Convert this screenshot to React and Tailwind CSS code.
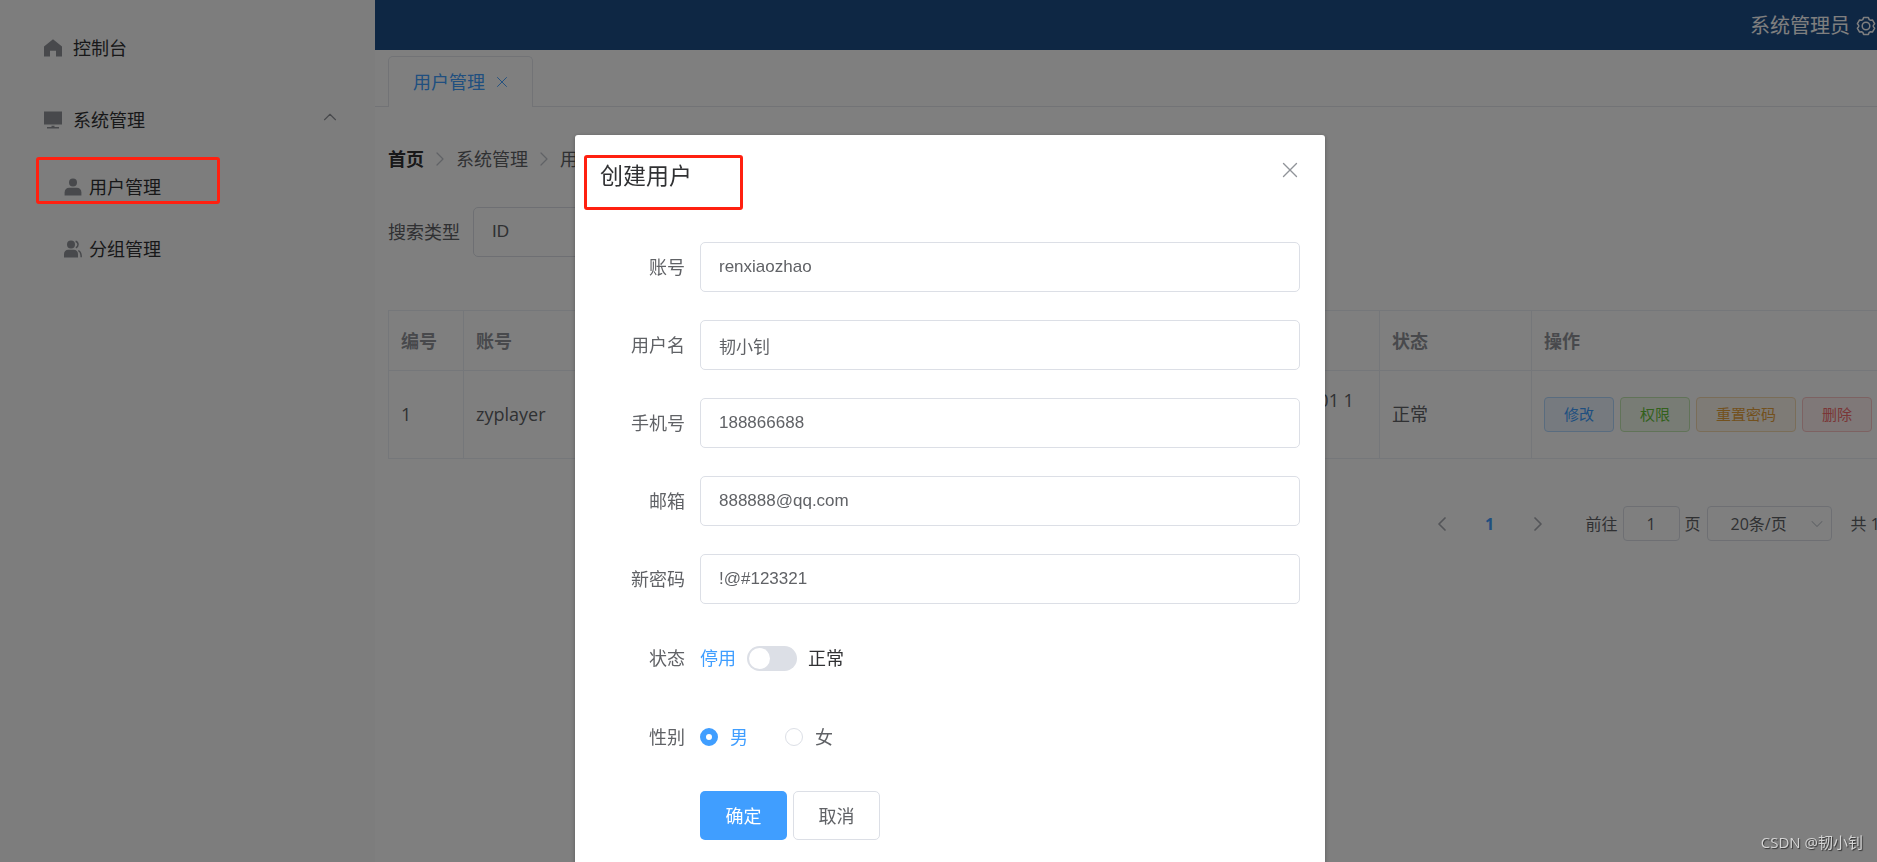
import React, { useState } from 'react';
import { ChevronDown, ChevronLeft, ChevronRight, ChevronUp, X } from 'lucide-react';

const HomeIcon = () => (
  <svg viewBox="0 0 18 18" className="size-[18px]" fill="currentColor">
    <path d="M9 0.3 18 7.6V17.6H12V11.8H6V17.6H0V7.6Z" />
  </svg>
);

const PlatformIcon = () => (
  <svg viewBox="0 0 18 18" className="size-[18px]" fill="currentColor">
    <path d="M0 0.5H18V13.5H0Z" />
    <path d="M7.5 14.8H10.5V16H15V17.4H3V16H7.5Z" />
  </svg>
);

const UserIcon = () => (
  <svg viewBox="0 0 18 18" className="size-[18px]" fill="currentColor">
    <circle cx="9" cy="4.5" r="4" />
    <path d="M0.6 17.5V14.5C0.6 11.6 2.6 9.8 5.2 9.8H12.8C15.4 9.8 17.4 11.6 17.4 14.5V17.5Z" />
  </svg>
);

const GroupIcon = () => (
  <svg viewBox="0 0 18 18" className="size-[18px]" fill="currentColor">
    <circle cx="7" cy="4.6" r="4" />
    <path d="M0 17.5V14.2C0 11.6 1.8 9.8 4.2 9.8H9.8C12.2 9.8 14 11.6 14 14.2V17.5Z" />
    <path d="M11.6 1.2C14.8 2.2 14.8 6.6 11.9 7.9M14.2 10.6C16.4 11.4 17.2 13 17.2 17.3" fill="none" stroke="currentColor" strokeWidth="1.5" />
  </svg>
);

const GearIcon = () => (
  <svg viewBox="0 0 20 20" className="size-5" fill="none" stroke="currentColor" strokeWidth="1.5" strokeLinejoin="round">
    <path d="M7.6 1.6H12.4L13.2 3.6L14.2 4.2L16.4 3.9L18.6 7.7L17.3 9.4V10.6L18.6 12.3L16.4 16.1L14.2 15.8L13.2 16.4L12.4 18.4H7.6L6.8 16.4L5.8 15.8L3.6 16.1L1.4 12.3L2.7 10.6V9.4L1.4 7.7L3.6 3.9L5.8 4.2L6.8 3.6Z" />
    <circle cx="10" cy="10" r="3.8" />
  </svg>
);

const menuItems = [
  { icon: UserIcon, label: '用户管理' },
  { icon: GroupIcon, label: '分组管理' },
];

const fields = [
  { id: 'userNo', label: '账号', value: 'renxiaozhao' },
  { id: 'userName', label: '用户名', value: '韧小钊' },
  { id: 'phone', label: '手机号', value: '188866688' },
  { id: 'email', label: '邮箱', value: '888888@qq.com' },
  { id: 'password', label: '新密码', value: '!@#123321' },
];

const columns = [
  { title: '编号', value: '1' },
  { title: '账号', value: 'zyplayer' },
  { title: '', value: '' },
  { title: '', value: '' },
  { title: '', value: '' },
  { title: '', value: '' },
  { title: '', value: <>2018-12-01 1<br />3:23:13</> },
  { title: '状态', value: '正常' },
];

const actions = [
  { label: '修改', style: 'text-[#409eff] bg-[#ecf5ff] border-[#b3d8ff]' },
  { label: '权限', style: 'text-[#67c23a] bg-[#f0f9eb] border-[#c2e7b0]' },
  { label: '重置密码', style: 'text-[#e6a23c] bg-[#fdf6ec] border-[#f5dab1]' },
  { label: '删除', style: 'text-[#f56c6c] bg-[#fef0f0] border-[#fbc4c4]' },
];

function Sidebar() {
  return (
    <aside className="w-[375px] shrink-0 bg-[#fafafa] pt-3 text-[#303133]">
      <a href="#console" className="flex h-[72px] items-center gap-[11px] pl-11">
        <span className="text-[#909399]"><HomeIcon /></span>
        控制台
      </a>
      <button className="flex h-[72px] w-full items-center gap-[11px] pr-[34px] pl-11">
        <span className="text-[#909399]"><PlatformIcon /></span>
        系统管理
        <ChevronUp size={22} strokeWidth={1.25} className="mb-1.5 ml-auto text-[#909399]" />
      </button>
      <nav>
        {menuItems.map((item) => {
          const Icon = item.icon;
          return (
            <a key={item.label} href="#menu" className="flex h-[62px] items-center gap-[7px] pl-16">
              <span className="text-[#909399]"><Icon /></span>
              {item.label}
            </a>
          );
        })}
      </nav>
    </aside>
  );
}

function UserTable() {
  return (
    <table className="mt-[53px] w-full table-fixed border-collapse text-left text-[#606266]">
      <colgroup>
        <col className="w-[75px]" />
        <col className="w-[152px]" />
        <col className="w-[152px]" />
        <col className="w-[153px]" />
        <col className="w-[160px]" />
        <col className="w-[152px]" />
        <col className="w-[147px]" />
        <col className="w-[152px]" />
        <col />
      </colgroup>
      <thead>
        <tr className="h-[60px] text-[#909399]">
          {columns.map((column, index) => (
            <th key={index} className="border border-[#ebeef5] px-3 font-bold">{column.title}</th>
          ))}
          <th className="border border-[#ebeef5] px-3 font-bold">操作</th>
        </tr>
      </thead>
      <tbody>
        <tr className="h-[88px]">
          {columns.map((column, index) => (
            <td key={index} className="border border-[#ebeef5] px-3 leading-[29px]">{column.value}</td>
          ))}
          <td className="border border-[#ebeef5] px-3">
            <div className="flex gap-[6px] whitespace-nowrap">
              {actions.map((action) => (
                <button key={action.label} className={`h-[35px] rounded-[4px] border px-[19px] text-[15px] ${action.style}`}>
                  {action.label}
                </button>
              ))}
            </div>
          </td>
        </tr>
      </tbody>
    </table>
  );
}

function Pagination() {
  return (
    <div className="mt-[47px] flex items-center justify-end text-base whitespace-nowrap text-[#606266]">
      <button aria-label="上一页" className="text-[#a8abb2]"><ChevronLeft size={24} strokeWidth={1.75} /></button>
      <button className="mx-[30px] w-3 font-bold text-[#409eff]">1</button>
      <button aria-label="下一页" className="mr-9 text-[#a8abb2]"><ChevronRight size={24} strokeWidth={1.75} /></button>
      <label htmlFor="jump">前往</label>
      <input id="jump" defaultValue="1" className="mx-[5px] h-[35px] w-[57px] rounded-[4px] border border-[#dcdfe6] text-center" />
      页
      <div className="relative mr-[19px] ml-[6px]">
        <select aria-label="每页条数" className="h-[35px] w-[125px] appearance-none rounded-[4px] border border-[#dcdfe6] pl-[23px]">
          <option>20条/页</option>
        </select>
        <ChevronDown size={20} strokeWidth={1.25} className="absolute top-2 right-[5px] text-[#c0c4cc]" />
      </div>
      共 1 条
    </div>
  );
}

function CreateUserDialog() {
  const [sex, setSex] = useState('男');
  const [enabled, setEnabled] = useState(false);

  return (
    <div role="dialog" aria-labelledby="dialog-title" className="relative mx-auto mt-[135px] w-full max-w-[750px] rounded-[3px] bg-white shadow-[0_1px_4px_rgba(0,0,0,0.3)]">
      <div className="flex h-[107px] items-start justify-between pt-[22px] pr-[22px] pl-[25px]">
        <h2 id="dialog-title" className="text-[23px] leading-9 text-[#303133]">创建用户</h2>
        <button aria-label="关闭" className="text-[#909399]"><X size={26} strokeWidth={1.25} /></button>
      </div>
      <div className="absolute top-5 left-[9px] h-[55px] w-[159px] rounded-[3px] border-[3px] border-[#ff2010]"></div>

      <form className="flex flex-col gap-[29px] pr-[25px] pb-16 pl-[25px] text-[#606266]">
        <div className="flex flex-col gap-7">
          {fields.map((field) => (
            <div key={field.id} className="flex items-center">
              <label htmlFor={field.id} className="w-[100px] pr-[15px] text-right">{field.label}</label>
              <input
                id={field.id}
                defaultValue={field.value}
                className="h-[50px] min-w-0 flex-1 rounded-[5px] border border-[#dcdfe6] px-[18px] font-['Liberation_Sans','Noto_Sans_CJK_SC',sans-serif] text-[17px]"
              />
            </div>
          ))}
        </div>

        <div className="flex h-[50px] items-center">
          <label htmlFor="status" className="w-[100px] pr-[15px] text-right">状态</label>
          <span className="text-[#409eff]">停用</span>
          <input
            id="status"
            type="checkbox"
            role="switch"
            checked={enabled}
            onChange={() => setEnabled(!enabled)}
            className="mx-[11px] h-[25px] w-[50px] appearance-none rounded-full bg-[#dcdfe6] p-0.5 before:block before:size-[21px] before:rounded-full before:bg-white checked:bg-[#409eff] checked:before:ml-auto"
          />
          <span className="text-[#303133]">正常</span>
        </div>

        <div role="radiogroup" aria-labelledby="sex-label" className="flex h-[50px] items-center">
          <span id="sex-label" className="w-[100px] pr-[15px] text-right">性别</span>
          {['男', '女'].map((name) => (
            <label key={name} className="mr-[37px] flex items-center gap-3 has-checked:text-[#409eff]">
              <input
                type="radio"
                name="sex"
                checked={sex === name}
                onChange={() => setSex(name)}
                className="size-[18px] appearance-none rounded-full border border-[#dcdfe6] checked:border-[6px] checked:border-[#409eff]"
              />
              {name}
            </label>
          ))}
        </div>

        <div className="flex gap-[6px] pl-[100px]">
          <button type="button" className="h-[49px] w-[87px] rounded-[5px] bg-[#409eff] text-white">确定</button>
          <button type="button" className="h-[49px] w-[87px] rounded-[5px] border border-[#dcdfe6]">取消</button>
        </div>
      </form>
    </div>
  );
}

export default function App() {
  return (
    <div className="flex h-screen overflow-hidden bg-white font-['Open_Sans','Noto_Sans_CJK_SC',sans-serif] text-lg">
      <Sidebar />

      <div className="min-w-0 flex-1 overflow-hidden">
        <header className="flex h-[50px] items-center justify-end gap-[6px] bg-[#1d4e89] pt-0.5 pr-px text-xl text-white">
          系统管理员
          <GearIcon />
        </header>

        {/* Tabs */}
        <div className="flex border-b border-[#e4e7ed] pt-[6px] pl-[13px]">
          <div className="-mb-px flex h-[51px] items-center gap-2 rounded-t-[5px] border border-b-0 border-[#e4e7ed] bg-white pr-[21px] pl-6 text-[#409eff]">
            用户管理
            <button aria-label="关闭标签"><X size={18} strokeWidth={1.25} /></button>
          </div>
        </div>

        <main className="-mr-[23px] pt-[38px] pl-[13px]">
          <div className="flex items-center gap-1 text-[#606266]">
            <a href="#home" className="font-bold text-[#303133]">首页</a>
            <ChevronRight size={24} strokeWidth={1.25} className="text-[#c0c4cc]" />
            <span>系统管理</span>
            <ChevronRight size={24} strokeWidth={1.25} className="text-[#c0c4cc]" />
            <span>用户管理</span>
          </div>

          <div className="mt-[34px] flex items-center gap-[13px] text-[#606266]">
            <label htmlFor="searchType">搜索类型</label>
            <select id="searchType" className="h-[50px] w-[190px] appearance-none rounded-[5px] border border-[#dcdfe6] px-[18px] font-['Liberation_Sans',sans-serif] text-[17px]">
              <option>ID</option>
            </select>
          </div>

          <UserTable />
          <Pagination />
        </main>
      </div>

      <div className="fixed inset-y-0 -right-[23px] left-0 overflow-hidden bg-black/50">
        <CreateUserDialog />
        <div className="absolute top-[157px] left-9 h-[47px] w-[184px] rounded-[3px] border-[3px] border-[#ff2010]"></div>
      </div>

      <div className="fixed right-3.5 bottom-2 text-[15px] text-[#d4d4d4] [text-shadow:1px_1px_1px_rgba(0,0,0,0.6)]">CSDN @韧小钊</div>
    </div>
  );
}
